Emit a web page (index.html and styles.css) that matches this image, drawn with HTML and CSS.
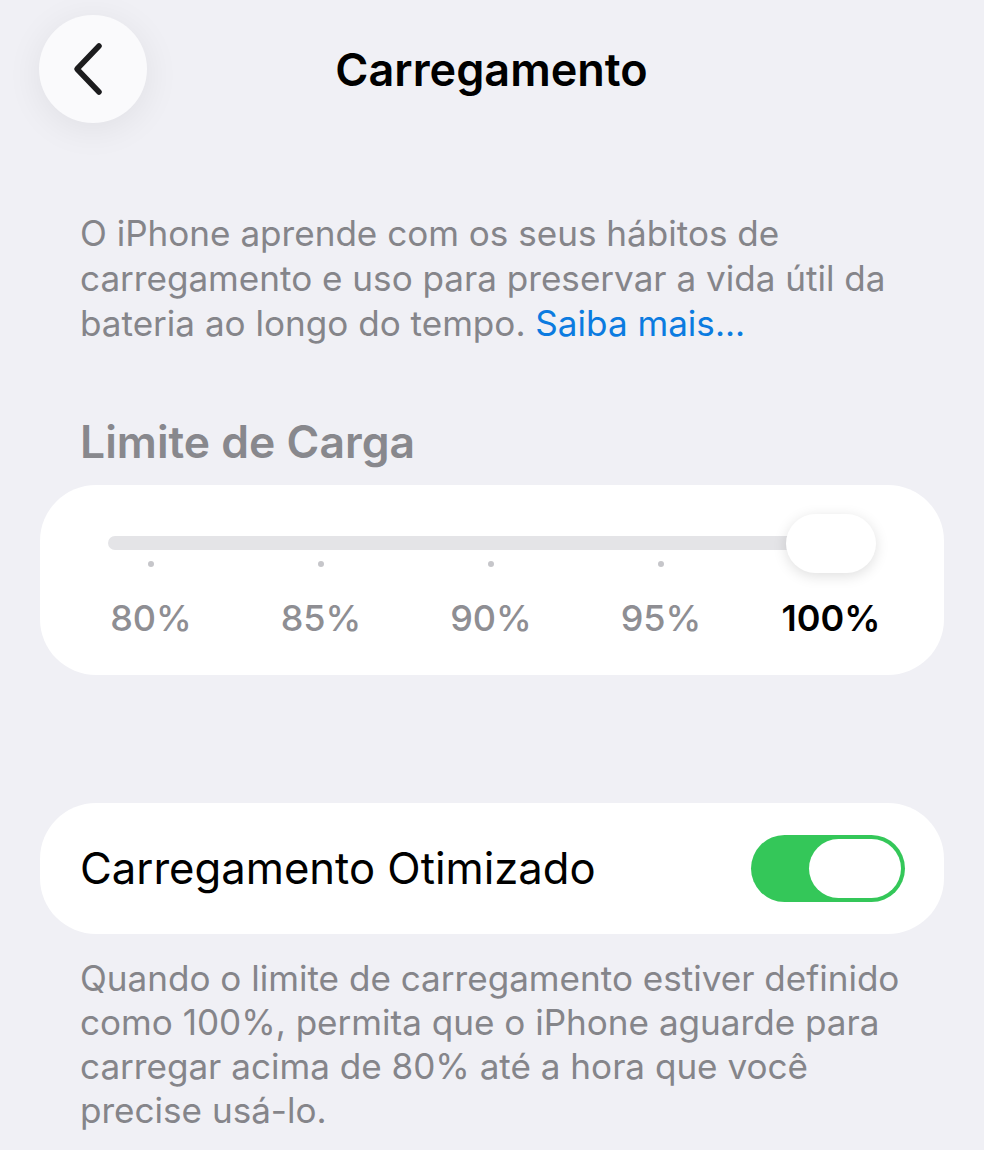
FILE: index.html
```html
<!DOCTYPE html>
<html lang="pt-BR">
<head>
    <meta charset="UTF-8">
    <meta name="viewport" content="width=device-width, initial-scale=1.0">
    <title>Carregamento</title>
    <link rel="stylesheet" href="styles.css">
</head>
<body>
    <header class="nav">
        <button class="back" aria-label="Voltar">
            <svg width="40" height="56" viewBox="0 0 40 56">
                <path d="M30 5 L8 28 L30 51" fill="none" stroke="#1c1c1e" stroke-width="5.5" stroke-linecap="round" stroke-linejoin="round"/>
            </svg>
        </button>
        <h1 class="title">Carregamento</h1>
        <div></div>
    </header>

    <main>
        <p class="intro">
            O iPhone aprende com os seus hábitos de carregamento e uso para preservar a vida útil da bateria ao longo do tempo. <a href="#" class="link">Saiba mais...</a>
        </p>

        <h2 class="section-title">Limite de Carga</h2>
        <section class="card slider-card">
            <div class="track">
                <div class="knob"></div>
            </div>
            <div class="steps">
                <div class="step"><span class="dot"></span><span class="pct">80%</span></div>
                <div class="step"><span class="dot"></span><span class="pct">85%</span></div>
                <div class="step"><span class="dot"></span><span class="pct">90%</span></div>
                <div class="step"><span class="dot"></span><span class="pct">95%</span></div>
                <div class="step active"><span class="dot"></span><span class="pct">100%</span></div>
            </div>
        </section>

        <section class="card toggle-card">
            <span class="toggle-label">Carregamento Otimizado</span>
            <div class="switch on"><div class="switch-knob"></div></div>
        </section>

        <p class="footnote">
            Quando o limite de carregamento estiver definido como 100%, permita que o iPhone aguarde para carregar acima de 80% até a hora que você precise usá-lo.
        </p>
    </main>
</body>
</html>
```

FILE: styles.css
```css
body {
    margin: 0;
    background-color: #f0f0f5;
    font-family: Inter, "Liberation Sans", sans-serif;
    color: #000;
}
.nav {
    display: grid;
    grid-template-columns: 1fr auto 1fr;
    align-items: center;
    padding: 15px 40px 0 39px;
}
.back {
    width: 108px;
    height: 108px;
    border-radius: 50%;
    border: none;
    background-color: #fafafc;
    box-shadow: 0 6px 36px rgba(0, 0, 0, 0.07);
    display: flex;
    align-items: center;
    justify-content: center;
    padding: 0 8px 0 0;
    cursor: pointer;
}
.title {
    margin: 0;
    font-size: 45px;
    font-weight: 600;
    color: #000;
}
main {
    padding: 0 40px;
}
.intro {
    margin: 88px 20px 0 40px;
    font-size: 35.1px;
    line-height: 45px;
    color: #85858a;
}
.link {
    color: #0b7be0;
    text-decoration: none;
}
.section-title {
    margin: 70px 40px 17px 40px;
    font-size: 44.5px;
    line-height: 52px;
    font-weight: 600;
    color: #88888d;
}
.card {
    background-color: #fff;
    border-radius: 56px;
}
.slider-card {
    height: 190px;
    padding: 51px 28px 0 26px;
    box-sizing: border-box;
}
.track {
    position: relative;
    margin: 0 42px;
    height: 14px;
    border-radius: 7px;
    background-color: #e4e4e7;
}
.knob {
    position: absolute;
    z-index: 1;
    right: -2px;
    top: -22px;
    width: 90px;
    height: 59px;
    border-radius: 30px;
    background-color: #fff;
    box-shadow: 0 3px 14px rgba(0, 0, 0, 0.13);
}
.steps {
    display: grid;
    grid-template-columns: repeat(5, 1fr);
}
.step {
    display: flex;
    flex-direction: column;
    align-items: center;
}
.dot {
    width: 6px;
    height: 6px;
    border-radius: 50%;
    background-color: #c6c6ca;
    margin-top: 11px;
}
.pct {
    margin-top: 29px;
    font-size: 36px;
    line-height: 44px;
    font-weight: 500;
    color: #8e8e93;
}
.step.active .pct {
    color: #000;
    font-weight: 600;
}
.toggle-card {
    margin-top: 128px;
    height: 131px;
    padding: 0 39px 0 40px;
    box-sizing: border-box;
    display: flex;
    align-items: center;
    justify-content: space-between;
}
.toggle-label {
    font-size: 43.6px;
    color: #000;
}
.switch {
    width: 154px;
    height: 67px;
    border-radius: 34px;
    background-color: #e4e4e7;
    padding: 4px;
    box-sizing: border-box;
    display: flex;
}
.switch.on {
    background-color: #34c759;
    justify-content: flex-end;
}
.switch-knob {
    width: 92px;
    height: 59px;
    border-radius: 30px;
    background-color: #fff;
}
.footnote {
    margin: 22px 20px 0 40px;
    font-size: 35.1px;
    line-height: 44px;
    color: #85858a;
}
```
